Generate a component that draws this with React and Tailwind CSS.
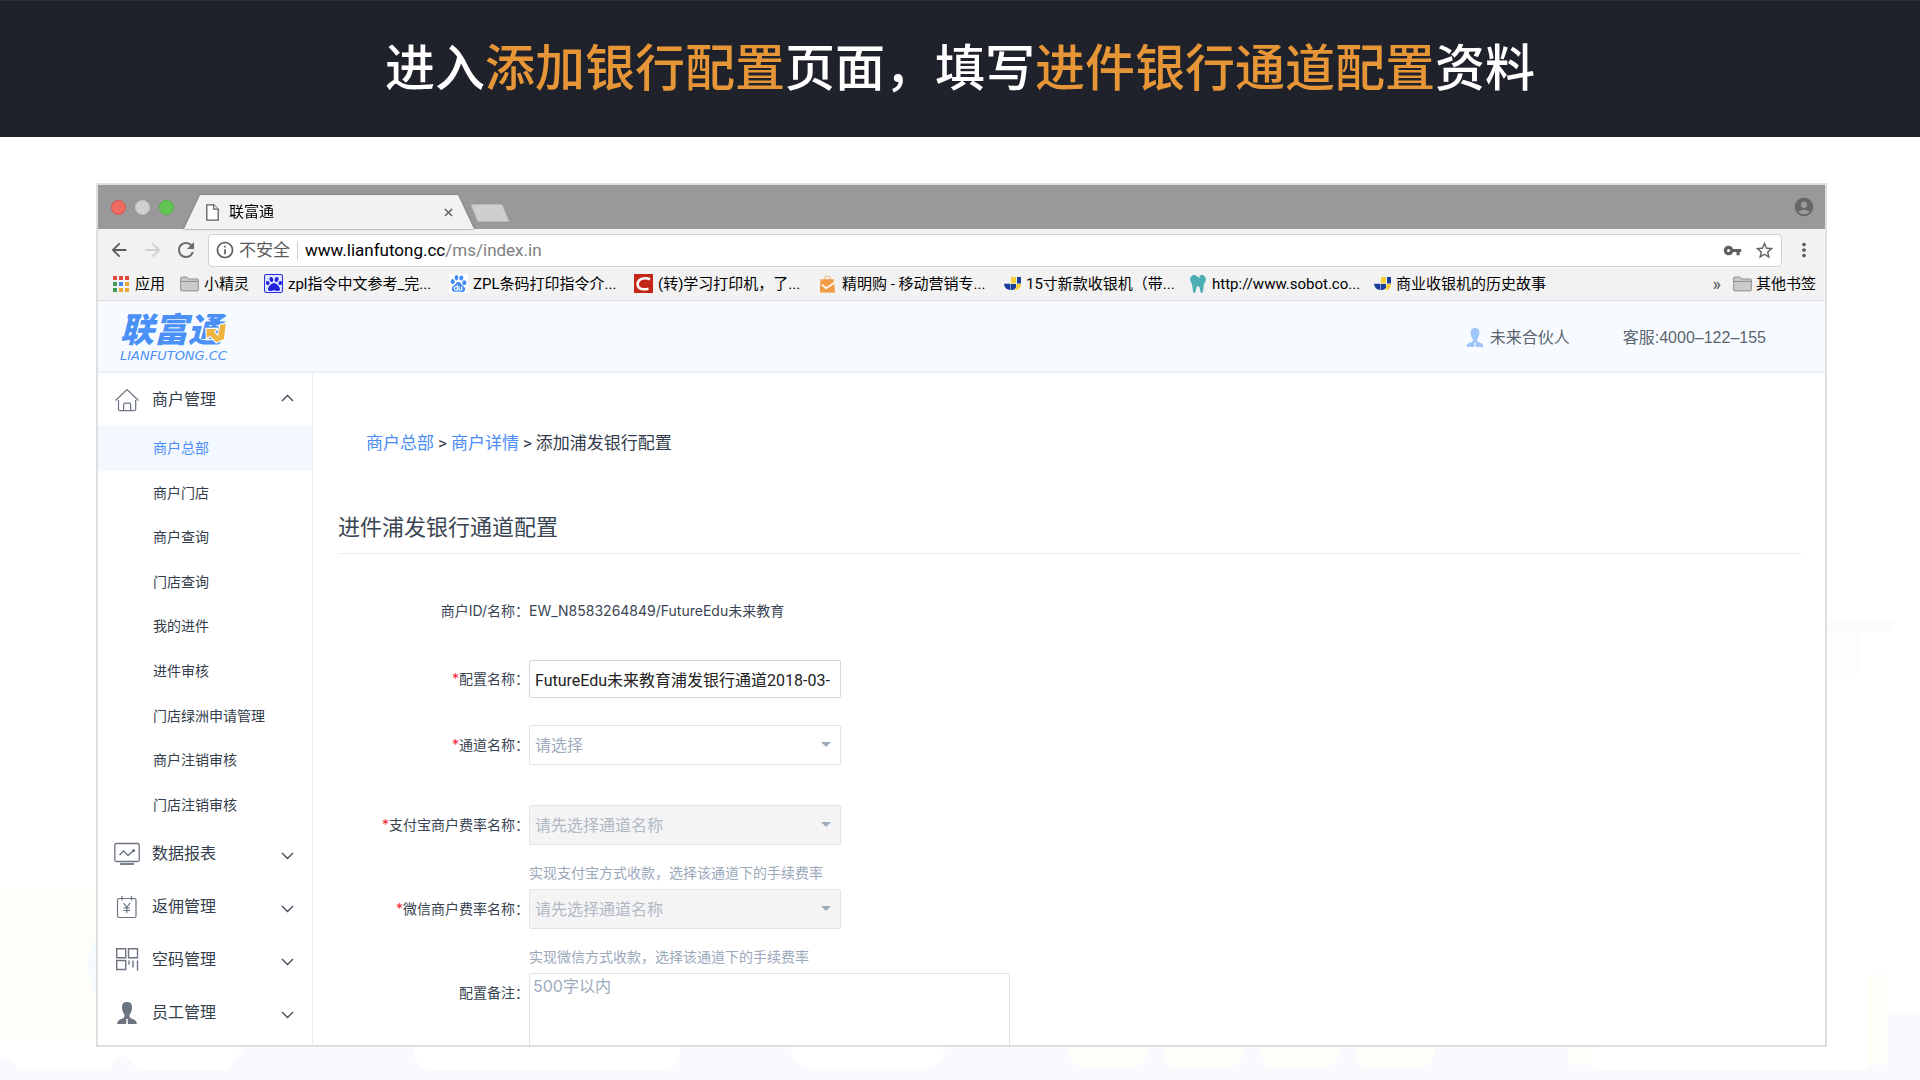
import React from 'react';
import { FaPaw, FaTooth } from 'react-icons/fa';
import { SiBaidu } from 'react-icons/si';
import {
  MdAccountCircle,
  MdArrowBack,
  MdArrowForward,
  MdInfoOutline,
  MdMoreVert,
  MdRefresh,
  MdStarBorder,
  MdVpnKey,
} from 'react-icons/md';

const SUB_ITEMS = [
  '商户总部',
  '商户门店',
  '商户查询',
  '门店查询',
  '我的进件',
  '进件审核',
  '门店绿洲申请管理',
  '商户注销审核',
  '门店注销审核',
];

const MENUS = [
  { label: '数据报表', Icon: ChartIcon },
  { label: '返佣管理', Icon: RebateIcon },
  { label: '空码管理', Icon: CodeIcon },
  { label: '员工管理', Icon: StaffIcon },
];

const BOOKMARKS = [
  { label: 'zpl指令中文参考_完...', Icon: PawBoxIcon },
  { label: 'ZPL条码打印指令介...', Icon: BaiduIcon },
  { label: '(转)学习打印机，了...', Icon: CsdnIcon },
  { label: '精明购 - 移动营销专...', Icon: BagIcon },
  { label: '15寸新款收银机（带...', Icon: JIcon },
  { label: 'http://www.sobot.co...', Icon: ToothIcon },
  { label: '商业收银机的历史故事', Icon: JIcon },
];

/* ---------- icons ---------- */

function PawBoxIcon() {
  return (
    <span className="flex size-[19px] items-center justify-center rounded-xs border border-[#2a2ae0] bg-[#dfe5ff]">
      <FaPaw size={16} color="#2222dd" />
    </span>
  );
}

function BaiduIcon() {
  return (
    <span className="flex size-[19px] items-center justify-center bg-white">
      <SiBaidu size={17} color="#3f8bf5" />
    </span>
  );
}

function CsdnIcon() {
  return (
    <svg viewBox="0 0 19 19" className="size-[19px]">
      <rect width="19" height="19" fill="#c22616" />
      <path d="M16 5.2C13 3.800 8 3.600 5.300 6.200 3 8.500 3 12.500 5.500 14.200c2.300 1.500 6 1.200 9 .5" fill="none" stroke="#fff" strokeWidth="2.600" />
    </svg>
  );
}

function BagIcon() {
  return (
    <svg viewBox="0 0 19 19" className="size-[18px]">
      <path d="M6 6V4a3 3 0 0 1 6 0v2" fill="none" stroke="#f4c58c" strokeWidth="1.400" />
      <path d="M1.500 4.500h14l1.500 14H1z" fill="#f09a43" />
      <path d="M3 10l4.500 4L18 7" fill="none" stroke="#fdf3e6" strokeWidth="2" />
    </svg>
  );
}

function JIcon() {
  return (
    <svg viewBox="0 0 17 17" className="size-[17px]">
      <path d="M7 2h5v6.500H7z" fill="#f4cf3a" />
      <path d="M13 2h4v6.500h-4z" fill="#1b3f9c" />
      <path d="M0 8.800h6.500v6.200C3 15 .5 13 0 8.800z" fill="#1b3f9c" />
      <path d="M7 9h5v3.500C11 14.500 9 15 7 15z" fill="#1b3f9c" />
      <path d="M12.500 9H17c0 3.500-2 6-6.500 6 1.500-1.300 2-3.500 2-6z" fill="#f4cf3a" />
    </svg>
  );
}

function ToothIcon() {
  return <FaTooth size={18} color="#4caeb2" />;
}

function FolderIcon() {
  return (
    <svg viewBox="0 0 20 16" className="h-4 w-[19px] shrink-0">
      <path d="M.7 14.500V1.700c0-.6.4-1 1-1h5.500l1.500 2h9.600c.6 0 1 .4 1 1v10.800c0 .5-.4.8-1 .8H1.700c-.6 0-1-.3-1-.8z" fill="#cbcbcb" stroke="#8b8b8b" />
      <path d="M.7 5.300h18.600" stroke="#8b8b8b" />
    </svg>
  );
}

function AppsIcon() {
  const colors = ['#e0493c', '#e0493c', '#e0493c', '#3f9b57', '#4884ee', '#eaa735', '#3f9b57', '#eaa735', '#eaa735'];
  return (
    <span className="grid grid-cols-3 gap-[2px]">
      {colors.map((c, i) => (
        <i key={i} className="size-1" style={{ backgroundColor: c }} />
      ))}
    </span>
  );
}

function FileIcon() {
  return (
    <svg viewBox="0 0 13 17" className="h-[17px] w-[13px]" fill="#fff" stroke="#5f5f5f" strokeWidth="1.300">
      <path d="M.8.8h7l4.400 4.400v11H.8z" />
      <path d="M7.800.8v4.400h4.400" />
    </svg>
  );
}

function HomeIcon() {
  return (
    <svg viewBox="0 0 26 26" className="size-[26px]" fill="none" stroke="#6b7480" strokeWidth="1.200">
      <path d="M1.500 13.500L13 2.500l11.500 11" />
      <path d="M4.500 13v9c0 1 .6 1.600 1.600 1.600h14c1 0 1.600-.6 1.600-1.600v-9" />
      <path d="M9.600 23.500v-6.300c0-.7.400-1.100 1.100-1.100h4.800c.7 0 1.100.4 1.100 1.100v6.300" />
    </svg>
  );
}

function ChartIcon() {
  return (
    <svg viewBox="0 0 26 26" className="size-[26px]" fill="none" stroke="#6b7480" strokeWidth="1.300">
      <rect x=".8" y="2.500" width="24.400" height="18" rx="1.500" />
      <path d="M6 23h14" strokeWidth="1.800" />
      <path d="M5.500 14l4-4 4.500 4.500 5.500-5" />
      <circle cx="19.500" cy="9.600" r=".9" fill="#6b7480" />
    </svg>
  );
}

function RebateIcon() {
  return (
    <svg viewBox="0 0 26 26" className="size-[26px]" fill="none" stroke="#6b7480" strokeWidth="1.200">
      <rect x="3.500" y="4.500" width="18.500" height="19" rx="1.500" />
      <path d="M8 2v4.500M17.500 2v4.500" />
      <path d="M9.500 9l3.300 4.500L16 9M12.800 13.500v5.500M9.500 14h6.600M9.500 16.500h6.600" />
    </svg>
  );
}

function CodeIcon() {
  return (
    <svg viewBox="0 0 26 26" className="size-[26px]" fill="none" stroke="#6b7480" strokeWidth="1.400">
      <path d="M2.700 1.700h9v9h-9zM14.500 1.700h9v9h-9zM2.700 13.500h9v9h-9z" />
      <path d="M15 13.500v4M19 13.500v7M23.500 13.500v10" />
    </svg>
  );
}

function PersonShape(props) {
  return (
    <svg viewBox="0 0 20 22" {...props}>
      <path d="M10 0c3.600 0 5.200 2.200 5 5.600-.1 1-.1 1.700-.3 2.500-.5 2.500-1.600 4-2.300 5 0 1.700.4 2.700 2.100 3.400 2.600 1 5.300 1.900 5.300 5.500H11l-.4-3.500.6-1.500h-2.400l.6 1.500L9 22H.2c0-3.600 2.700-4.500 5.300-5.500 1.700-.7 2.100-1.700 2.100-3.400-.7-1-1.800-2.500-2.300-5C5.100 7.300 5.100 6.600 5 5.600 4.800 2.200 6.400 0 10 0z" />
    </svg>
  );
}

function StaffIcon() {
  return <PersonShape className="mx-[3px] h-[22px] w-5 fill-[#6b7480]" />;
}

function Chevron({ up }) {
  return (
    <svg viewBox="0 0 13 8" className={up ? 'mb-1 h-2 w-[13px]' : 'mt-1 h-2 w-[13px]'} fill="none" stroke="#3d4755" strokeWidth="1.300">
      <path d={up ? 'M1 7l5.500-5.500L12 7' : 'M1 1l5.500 5.500L12 1'} />
    </svg>
  );
}

/* ---------- page backdrop ---------- */

function Backdrop() {
  return (
    <svg className="absolute inset-0 -z-10 h-full w-full" viewBox="0 0 1920 1080" preserveAspectRatio="none">
      <rect y="888" width="100" height="150" fill="#fffdf8" />
      <ellipse cx="99" cy="965" rx="11" ry="28" fill="#f6fbfe" />
      <rect y="1040" width="1888" height="40" fill="#f9fafe" />
      <rect x="1888" y="1013" width="32" height="67" fill="#f9fafe" />
      <path d="M0 1040v17h6q8 2 12 12h92l4-9 9-5 8 5q3 8 9 10h88q6-11 17-23V1040z" fill="#fff" />
      <path d="M412 1040h269q0 30-20 30H432q-20 0-20-30z" fill="#fff" />
      <path d="M789 1040h157q-2 28-20 28H810q-18 0-21-28z" fill="#fff" />
      <g fill="#fffef9">
        <path d="M1068 1040h80q0 28-18 28h-44q-18 0-18-28z" />
        <path d="M1162 1040h82q0 28-18 28h-46q-18 0-18-28z" />
        <path d="M1259 1040h81q0 28-18 28h-45q-18 0-18-28z" />
        <path d="M1354 1040h81q0 28-18 28h-45q-18 0-18-28z" />
        <rect x="1568" y="1040" width="25" height="25" />
        <rect x="1868" y="974" width="20" height="91" />
      </g>
      <rect x="1593" y="1040" width="275" height="30" fill="#fff" />
      <rect x="1820" y="620" width="74" height="11" fill="#fafcfe" />
      <path d="M1820 631h40v40l-40 13z" fill="#fbfdff" />
    </svg>
  );
}

/* ---------- browser chrome ---------- */

function TabStrip() {
  return (
    <div className="flex h-11 shrink-0 items-end bg-[#999] pl-[13px] pr-[10px]">
      <div className="flex h-11 items-center gap-[9px]">
        <i className="size-[15px] rounded-full border border-[#d9564b] bg-[#ed6b60]" />
        <i className="size-[15px] rounded-full border border-[#c4c4c4] bg-[#d0d0d0]" />
        <i className="size-[15px] rounded-full border border-[#4fb03f] bg-[#62c454]" />
      </div>
      <div className="ml-[10px] drop-shadow-[0_0_1px_#666]">
        <div className="flex h-[34px] w-[290px] items-center bg-[#f2f2f2] pl-[22px] pr-[21px] [clip-path:polygon(16px_0,274px_0,100%_100%,0_100%)]">
          <FileIcon />
          <span className="ml-[10px] flex-1 text-[15px] leading-5 text-black">联富通</span>
          <button type="button" aria-label="关闭标签页">
            <svg viewBox="0 0 10 10" className="size-[9px]" stroke="#5a5a5a" strokeWidth="1.500">
              <path d="M1 1l8 8M9 1l-8 8" />
            </svg>
          </button>
        </div>
      </div>
      <button type="button" aria-label="新标签页" className="mb-[7px] h-[18px] w-8 skew-x-[22deg] rounded-xs border border-[#b8b8b8] bg-[#cfcfcf]" />
      <button type="button" aria-label="用户" className="mb-[11px] ml-auto text-[#666]">
        <MdAccountCircle size={22} />
      </button>
    </div>
  );
}

function Toolbar() {
  return (
    <div className="flex h-[38px] shrink-0 items-center bg-[#f2f2f2] pl-[10px] pr-[10px] pt-1">
      <button type="button" aria-label="后退" className="text-[#5a5a5a]"><MdArrowBack size={22} /></button>
      <button type="button" aria-label="前进" className="ml-3 text-[#d0d0d0]"><MdArrowForward size={22} /></button>
      <button type="button" aria-label="刷新" className="ml-[10px] text-[#6a6a6a]"><MdRefresh size={24} /></button>
      <div className="ml-[10px] flex h-[33px] flex-1 items-center rounded-sm border border-[#d2d2d2] bg-white pl-[6px] pr-[6px]">
        <MdInfoOutline size={20} color="#5a5a5a" />
        <span className="ml-1 text-[17px] leading-6 text-[#5a5a5a]">不安全</span>
        <span className="mx-[7px] h-[19px] w-px bg-[#d0d0d0]" />
        <span className="flex-1 text-[17px] leading-6 text-[#808080]">
          <span className="text-black">www.lianfutong.cc</span>/ms/index.in
        </span>
        <MdVpnKey size={19} color="#5f5f5f" />
        <MdStarBorder size={21} color="#5f5f5f" className="ml-3" />
      </div>
      <button type="button" aria-label="菜单" className="ml-[11px] text-[#5a5a5a]"><MdMoreVert size={22} /></button>
    </div>
  );
}

function BookmarkBar() {
  return (
    <nav className="flex h-[34px] shrink-0 items-center whitespace-nowrap border-b border-[#dcdee0] bg-[#f2f2f2] pl-[15px] pr-[9px] text-[15px] leading-5 text-black">
      <a href="#apps" className="flex w-[67px] items-center gap-[6px]"><AppsIcon />应用</a>
      <a href="#folder" className="flex w-[84px] items-center gap-[5px]"><FolderIcon />小精灵</a>
      {BOOKMARKS.map(({ label, Icon }) => (
        <a key={label} href="#bookmark" className="flex w-[185px] items-center gap-[5px]">
          <Icon />
          {label}
        </a>
      ))}
      <button type="button" aria-label="更多书签" className="ml-auto text-lg leading-5 text-[#5a5a5a]">»</button>
      <a href="#others" className="ml-3 flex items-center gap-1"><FolderIcon />其他书签</a>
    </nav>
  );
}

/* ---------- site ---------- */

function Logo() {
  return (
    <a href="#home" className="relative flex flex-col text-[#4a90f7]">
      <span className="text-[34px] font-black italic leading-8">联富通</span>
      <span className="mt-1 font-['DejaVu_Sans'] text-[13px] italic leading-3">LIANFUTONG.CC</span>
      <svg viewBox="-4 -4 66 64" className="absolute left-[85px] top-2 size-[22px]">
        <path
          d="M0 16h30l-7 9 12 13 7-34 16-4-5 46-23 10-18-20-10 7z"
          fill="#f0b440"
          stroke="#f7fbff"
          strokeWidth="7"
          paintOrder="stroke"
        />
      </svg>
    </a>
  );
}

function SiteHeader() {
  return (
    <header className="flex h-[72px] shrink-0 items-center border-b-2 border-[#ebf1f6] bg-[#f7fbff] pl-[22px] pr-[59px] pt-[3px] text-base text-[#5c6570]">
      <Logo />
      <a href="#me" className="ml-auto flex items-center gap-[6px]">
        <PersonShape className="h-[19px] w-[18px] fill-[#9fc5fb]" />
        未来合伙人
      </a>
      <span className="ml-[53px] font-['Liberation_Sans','Noto_Sans_CJK_SC',sans-serif]">客服:4000–122–155</span>
    </header>
  );
}

function MenuButton({ label, Icon, open }) {
  return (
    <button type="button" aria-expanded={!!open} className="flex h-[53px] w-full items-center pl-4 pr-[18px] text-base text-[#333d4b]">
      <Icon />
      <span className="ml-3 flex-1 text-left">{label}</span>
      <Chevron up={open} />
    </button>
  );
}

function Sidebar() {
  return (
    <aside className="w-[215px] shrink-0 overflow-hidden border-r border-[#e6ebf5] bg-white">
      <MenuButton label="商户管理" Icon={HomeIcon} open />
      <ul className="grid h-[401px] auto-rows-fr text-sm">
        {SUB_ITEMS.map((item, i) => (
          <li key={item} className={i === 0 ? 'flex bg-[#f3f8ff] text-[#4a8cf7]' : 'flex text-[#333d4b]'}>
            <a href="#item" className="flex flex-1 items-center pl-[55px]">{item}</a>
          </li>
        ))}
      </ul>
      {MENUS.map((menu) => (
        <MenuButton key={menu.label} {...menu} />
      ))}
    </aside>
  );
}

function Row({ label, id, required, className = '', children }) {
  return (
    <div className={`flex min-h-10 ${className}`}>
      <label htmlFor={id} className="flex h-10 w-[191px] shrink-0 items-center justify-end text-sm text-[#3a4553]">
        {required && <span className="text-[#f5222d]">*</span>}
        {label}：
      </label>
      {children}
    </div>
  );
}

function Select({ id, placeholder, disabled }) {
  return (
    <div className="relative h-10 w-[312px]">
      <select
        id={id}
        disabled={disabled}
        className="h-full w-full appearance-none rounded-xs border border-[#dfe3ea] bg-white px-[5px] text-base text-[#9dabbd] opacity-100 disabled:bg-[#f4f4f4] disabled:text-[#b0b9c5]"
      >
        <option>{placeholder}</option>
      </select>
      <i className="pointer-events-none absolute right-[10px] top-[17px] border-x-[5px] border-t-[5px] border-x-transparent border-t-[#9dabbd]" />
    </div>
  );
}

function ConfigForm() {
  return (
    <form className="mt-[37px] font-[Inter,'Noto_Sans_CJK_SC',sans-serif]">
      <Row label="商户ID/名称" id="merchant" className="mb-7">
        <output id="merchant" className="flex h-10 items-center text-sm text-[#3a4553]">EW_N8583264849/FutureEdu未来教育</output>
      </Row>
      <Row label="配置名称" id="name" required className="mb-[26px] items-center">
        <input
          id="name"
          type="text"
          defaultValue="FutureEdu未来教育浦发银行通道2018-03-"
          className="h-[38px] w-[312px] rounded-xs border border-[#d5d7da] bg-white pl-[5px] font-[Roboto,'Noto_Sans_CJK_SC',sans-serif] text-base text-[#222]"
        />
      </Row>
      <Row label="通道名称" id="channel" required className="mb-10">
        <Select id="channel" placeholder="请选择" />
      </Row>
      <Row label="支付宝商户费率名称" id="alipay" required className="mb-1">
        <div>
          <Select id="alipay" placeholder="请先选择通道名称" disabled />
          <p className="mt-4 text-sm leading-6 text-[#9aa8ba]">实现支付宝方式收款，选择该通道下的手续费率</p>
        </div>
      </Row>
      <Row label="微信商户费率名称" id="wechat" required className="mb-1">
        <div>
          <Select id="wechat" placeholder="请先选择通道名称" disabled />
          <p className="mt-4 text-sm leading-6 text-[#9aa8ba]">实现微信方式收款，选择该通道下的手续费率</p>
        </div>
      </Row>
      <Row label="配置备注" id="remark">
        <textarea
          id="remark"
          placeholder="500字以内"
          className="h-32 w-[481px] resize-none rounded-xs border border-[#dfe3ea] bg-white px-[3px] text-base placeholder:text-[#9dabbd]"
        />
      </Row>
    </form>
  );
}

export default function App() {
  return (
    <div lang="zh-CN" className="relative isolate flex h-screen flex-col overflow-hidden bg-white font-[Roboto,'Noto_Sans_CJK_SC',sans-serif]">
      <Backdrop />
      <div className="flex h-[137px] shrink-0 items-center justify-center border-t border-[#2b2f38] bg-[#1f222b]">
        <h1 className="text-[50px] font-medium leading-none text-white">
          进入<span className="text-[#e69537]">添加银行配置</span>页面，填写<span className="text-[#e69537]">进件银行通道配置</span>资料
        </h1>
      </div>

      <div className="mb-[33px] ml-24 mr-[93px] mt-[46px] flex min-h-0 flex-1 flex-col border-2 border-[#dedfdf] bg-white">
        <TabStrip />
        <Toolbar />
        <BookmarkBar />
        <SiteHeader />
        <div className="flex min-h-0 flex-1">
          <Sidebar />
          <main className="min-w-0 flex-1 overflow-hidden bg-white pl-[25px] pr-6 pt-[58px]">
            <nav className="flex gap-1 pl-7 text-[17px] leading-6 text-[#333d4b]">
              <a href="#hq" className="text-[#4a8cf7]">商户总部</a>
              <span>&gt;</span>
              <a href="#detail" className="text-[#4a8cf7]">商户详情</a>
              <span>&gt;</span>
              <span>添加浦发银行配置</span>
            </nav>
            <h2 className="mt-[57px] border-b border-[#ebebeb] pb-[9px] text-[22px] leading-8 text-[#3a4553]">进件浦发银行通道配置</h2>
            <ConfigForm />
          </main>
        </div>
      </div>
    </div>
  );
}
